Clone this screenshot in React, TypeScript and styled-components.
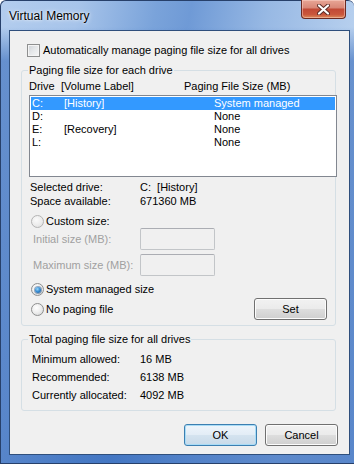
import React from "react";
import styled, { createGlobalStyle } from "styled-components";

const GlobalStyle = createGlobalStyle`
  html, body { margin: 0; padding: 0; background: #fff; }
  body {
    font-family: "Liberation Sans", Arial, sans-serif;
    font-size: 11px;
    color: #000;
  }
  * { box-sizing: border-box; }
`;

const Window = styled.div`
  width: 354px;
  height: 464px;
  display: flex;
  flex-direction: column;
  padding: 0 4px 8px 8px;
  border-radius: 6px 6px 0 0;
  border: 1px solid #27406a;
  border-right: none;
  background:
    linear-gradient(180deg, rgba(255,255,255,0) 0, rgba(255,255,255,0) 26px, rgba(40,95,180,0.55) 60px, rgba(45,100,185,0.65) 100%),
    linear-gradient(100deg, #b3cdee 0%, #a7c4ea 18%, #7aa3da 36%, #6f9ad6 44%, #98b9e4 62%, #b6cfee 82%, #aac6ea 100%);
`;

const TitleBar = styled.div`
  height: 29px;
  display: flex;
  align-items: flex-start;
  justify-content: space-between;
`;

const Title = styled.span`
  margin-top: 8px;
  font-size: 12px;
  line-height: 14px;
  color: #000;
  text-shadow: 0 0 5px rgba(255, 255, 255, 0.9), 0 0 2px rgba(255, 255, 255, 0.8);
`;

const CloseButton = styled.div`
  width: 45px;
  height: 19px;
  margin-right: 4px;
  margin-top: -1px;
  border: 1px solid #6b2a22;
  border-top: none;
  border-radius: 0 0 4px 4px;
  display: flex;
  align-items: center;
  justify-content: center;
  background: linear-gradient(180deg, #e8a696 0%, #d98878 42%, #c24a36 52%, #c9563c 80%, #dc8a5a 100%);
  box-shadow: inset 0 0 0 1px rgba(255, 220, 210, 0.45);
`;

const Client = styled.div`
  flex: 1;
  display: flex;
  flex-direction: column;
  background: #f0f0f0;
  border: 1px solid #2f4f7c;
  padding: 0 11px;
`;

const CheckRow = styled.label`
  display: flex;
  align-items: center;
  gap: 3px;
  height: 14px;
  margin-top: 12px;
  padding-left: 6px;
  line-height: 14px;
`;

const CheckBox = styled.span`
  width: 13px;
  height: 13px;
  flex: none;
  border: 1px solid #8e8f8f;
  background: linear-gradient(135deg, #cdd1d6 0%, #e6e8ea 50%, #f7f7f7 100%);
  box-shadow: inset 0 0 0 1px #f4f4f4;
`;

const GroupBox = styled.fieldset<{ $top: number; $bottom: number }>`
  margin: ${(p) => p.$top}px 2px 0 0;
  padding: 2px 7px ${(p) => p.$bottom}px 7px;
  border: 1px solid #d5dfe5;
  border-radius: 3px;
  min-width: 0;
`;

const Legend = styled.legend`
  padding: 0 1px;
  margin-left: -1px;
  line-height: 14px;
`;

const ListHeader = styled.div`
  display: grid;
  grid-template-columns: 32px 123px auto;
  line-height: 14px;
`;

const ListBox = styled.div`
  margin: 2px -9px 0 0;
  height: 82px;
  border: 1px solid #828790;
  background: #fff;
  padding: 1px;
`;

const ListRow = styled.div<{ $selected?: boolean }>`
  display: grid;
  grid-template-columns: 32px 150px auto;
  height: 13px;
  line-height: 13px;
  padding-left: 1px;
  background: ${(p) => (p.$selected ? "#3399ff" : "transparent")};
  color: ${(p) => (p.$selected ? "#fff" : "#000")};
`;

const InfoGrid = styled.div<{ $top: number; $left: number; $col: number; $line: number }>`
  display: grid;
  grid-template-columns: ${(p) => p.$col}px auto;
  margin-top: ${(p) => p.$top}px;
  padding-left: ${(p) => p.$left}px;
  line-height: ${(p) => p.$line}px;
`;

const RadioRow = styled.label<{ $top: number; $disabled?: boolean }>`
  display: flex;
  align-items: center;
  gap: 2px;
  height: 13px;
  margin-top: ${(p) => p.$top}px;
  padding-left: 2px;
  line-height: 13px;
  color: #000;
`;

const Radio = styled.span<{ $checked?: boolean; $disabled?: boolean }>`
  width: 13px;
  height: 13px;
  flex: none;
  border-radius: 50%;
  border: 1px solid ${(p) => (p.$disabled ? "#b4b4b4" : "#8e8f8f")};
  background: ${(p) =>
    p.$disabled
      ? "radial-gradient(circle at 40% 35%, #fafafa 0%, #ececec 55%, #dadada 100%)"
      : "radial-gradient(circle at 40% 35%, #ffffff 0%, #ededed 50%, #cfd1d3 100%)"};
  display: flex;
  align-items: center;
  justify-content: center;
  &::after {
    content: "";
    display: ${(p) => (p.$checked ? "block" : "none")};
    width: 6px;
    height: 6px;
    border-radius: 50%;
    background: radial-gradient(circle at 40% 35%, #9ad8fb 0%, #3a8fd4 45%, #15508f 100%);
    box-shadow: 0 0 0 1px rgba(30, 70, 120, 0.45);
  }
`;

const SizeRow = styled.div<{ $top: number }>`
  display: grid;
  grid-template-columns: 107px 75px;
  align-items: center;
  height: 22px;
  margin-top: ${(p) => p.$top}px;
  padding-left: 4px;
`;

const DisabledLabel = styled.span`
  color: #a0a0a0;
`;

const TextBox = styled.div`
  height: 22px;
  border: 1px solid #c2c5c8;
  border-top-color: #abadb3;
  border-radius: 2px;
  background: #f0f0f0;
`;

const SetRow = styled.div`
  display: flex;
  align-items: center;
  justify-content: space-between;
  height: 22px;
  margin-top: 2px;
  padding-left: 2px;
  padding-right: 1px;
`;

const RadioInline = styled.label`
  display: flex;
  align-items: center;
  gap: 2px;
  line-height: 13px;
`;

const Button = styled.button<{ $default?: boolean }>`
  width: 73px;
  height: 22px;
  padding: 0;
  font-family: "Liberation Sans", Arial, sans-serif;
  font-size: 11px;
  color: #000;
  border-radius: 3px;
  border: 1px solid ${(p) => (p.$default ? "#3c7fb1" : "#707070")};
  background: ${(p) =>
    p.$default
      ? "linear-gradient(180deg, #eef5fb 0%, #e3edf6 48%, #d4e3ef 52%, #c8dae9 100%)"
      : "linear-gradient(180deg, #f2f2f2 0%, #ebebeb 48%, #dddddd 52%, #cfcfcf 100%)"};
  box-shadow: inset 0 0 0 1px ${(p) => (p.$default ? "#a9dcf6" : "#fcfcfc")};
`;

const ButtonRow = styled.div`
  display: flex;
  justify-content: flex-end;
  gap: 8px;
  margin-top: 13px;
`;

const drives = [
  { letter: "C:", label: "[History]", size: "System managed", selected: true },
  { letter: "D:", label: "", size: "None" },
  { letter: "E:", label: "[Recovery]", size: "None" },
  { letter: "L:", label: "", size: "None" },
];

export default function App() {
  return (
    <>
      <GlobalStyle />
      <Window>
        <TitleBar>
          <Title>Virtual Memory</Title>
          <CloseButton>
            <svg width="13" height="11" viewBox="0 0 13 11">
              <path d="M2 1.5 L11 9.5 M11 1.5 L2 9.5" stroke="#5a2a24" strokeWidth="4" strokeLinecap="round" />
              <path d="M2 1.5 L11 9.5 M11 1.5 L2 9.5" stroke="#fff" strokeWidth="2.2" strokeLinecap="round" />
            </svg>
          </CloseButton>
        </TitleBar>
        <Client>
          <CheckRow>
            <CheckBox />
            <span>Automatically manage paging file size for all drives</span>
          </CheckRow>

          <GroupBox $top={6} $bottom={5}>
            <Legend>Paging file size for each drive</Legend>
            <ListHeader>
              <span>Drive</span>
              <span>[Volume Label]</span>
              <span>Paging File Size (MB)</span>
            </ListHeader>
            <ListBox>
              {drives.map((d) => (
                <ListRow key={d.letter} $selected={d.selected}>
                  <span>{d.letter}</span>
                  <span>{d.label}</span>
                  <span>{d.size}</span>
                </ListRow>
              ))}
            </ListBox>
            <InfoGrid $top={3} $left={1} $col={110} $line={14}>
              <span>Selected drive:</span>
              <span>C:&nbsp;&nbsp;[History]</span>
              <span>Space available:</span>
              <span>671360 MB</span>
            </InfoGrid>
            <RadioRow $top={7}>
              <Radio $disabled />
              <span>Custom size:</span>
            </RadioRow>
            <SizeRow $top={0}>
              <DisabledLabel>Initial size (MB):</DisabledLabel>
              <TextBox />
            </SizeRow>
            <SizeRow $top={4}>
              <DisabledLabel>Maximum size (MB):</DisabledLabel>
              <TextBox />
            </SizeRow>
            <RadioRow $top={7}>
              <Radio $checked />
              <span>System managed size</span>
            </RadioRow>
            <SetRow>
              <RadioInline>
                <Radio />
                <span>No paging file</span>
              </RadioInline>
              <Button>Set</Button>
            </SetRow>
          </GroupBox>

          <GroupBox $top={6} $bottom={6}>
            <Legend>Total paging file size for all drives</Legend>
            <InfoGrid $top={2} $left={3} $col={108} $line={18}>
              <span>Minimum allowed:</span>
              <span>16 MB</span>
              <span>Recommended:</span>
              <span>6138 MB</span>
              <span>Currently allocated:</span>
              <span>4092 MB</span>
            </InfoGrid>
          </GroupBox>

          <ButtonRow>
            <Button $default>OK</Button>
            <Button>Cancel</Button>
          </ButtonRow>
        </Client>
      </Window>
    </>
  );
}
